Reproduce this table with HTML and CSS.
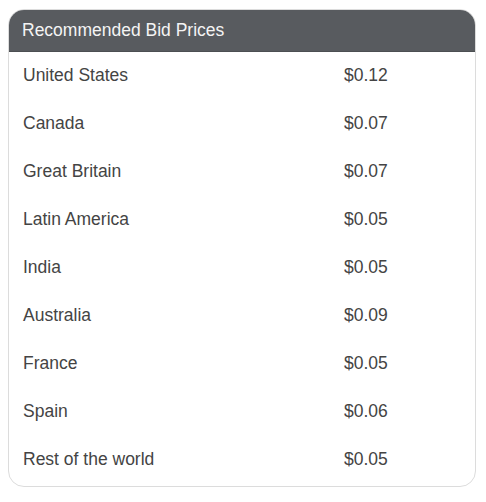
FILE: index.html
```html
<!DOCTYPE html>
<html>
<head>
<meta charset="utf-8">
<link rel="stylesheet" href="styles.css">
</head>
<body>
<div class="card">
  <div class="card-header">Recommended Bid Prices</div>
  <div class="rows">
    <div class="row"><span class="country">United States</span><span class="price">$0.12</span></div>
    <div class="row"><span class="country">Canada</span><span class="price">$0.07</span></div>
    <div class="row"><span class="country">Great Britain</span><span class="price">$0.07</span></div>
    <div class="row"><span class="country">Latin America</span><span class="price">$0.05</span></div>
    <div class="row"><span class="country">India</span><span class="price">$0.05</span></div>
    <div class="row"><span class="country">Australia</span><span class="price">$0.09</span></div>
    <div class="row"><span class="country">France</span><span class="price">$0.05</span></div>
    <div class="row"><span class="country">Spain</span><span class="price">$0.06</span></div>
    <div class="row"><span class="country">Rest of the world</span><span class="price">$0.05</span></div>
  </div>
</div>
</body>
</html>
```
FILE: styles.css
```css
html, body {
  margin: 0;
  padding: 0;
  background: #ffffff;
}
body {
  padding: 9px 10px 0 8px;
  font-family: "Liberation Sans", Arial, sans-serif;
}
.card {
  width: 468px;
  box-sizing: border-box;
  border: 1px solid #dcdcdc;
  border-radius: 16px;
  overflow: hidden;
  background: #fff;
}
.card-header {
  background: #585b5f;
  color: #f4f4f4;
  font-size: 17.5px;
  height: 42px;
  line-height: 42px;
  padding-left: 14px;
  border-bottom: 1px solid #4c4f52;
  margin: -1px -1px 0 -1px;
}
.rows {
  padding-bottom: 2px;
}
.row {
  display: grid;
  grid-template-columns: 321px 1fr;
  box-sizing: border-box;
  height: 48px;
  padding-bottom: 2px;
  align-items: center;
  padding-left: 14px;
  font-size: 17.5px;
  color: #444444;
}
```
